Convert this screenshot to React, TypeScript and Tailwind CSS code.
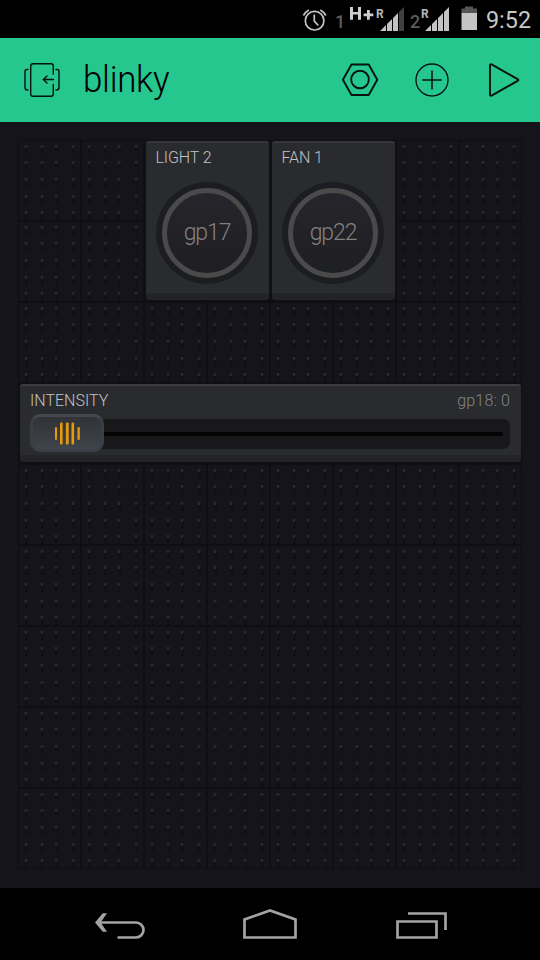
const LABEL = "font-['Roboto','Noto_Sans',sans-serif]";

const DOT_X = [6, 22, 36, 53];
const DOT_Y = [5, 21, 38, 55, 71];

function Cell() {
  return (
    <div className="h-[81px] w-[63px] border border-[#0f0f13]">
      <svg width="61" height="79" viewBox="1 1 61 79" shapeRendering="crispEdges">
        {DOT_Y.map((y) =>
          DOT_X.map((x) => (
            <g key={`${x}-${y}`}>
              <rect x={x + 1} y={y + 2} width="3" height="7" fill="#111115" />
              <rect x={x} y={y} width="4" height="2" fill="#1d1d21" />
              <rect x={x + 1} y={y} width="2" height="3" fill="#28282b" />
            </g>
          )),
        )}
      </svg>
    </div>
  );
}

function ButtonWidget({ title, pin, place }: { title: string; pin: string; place: string }) {
  return (
    <div className={`${place} border border-r-0 border-[#0f0f13] bg-[#111115] pr-[1.5px] pb-[1px] pl-[0.5px]`}>
      <div className="flex h-full flex-col items-center rounded-[3px] border-t-2 border-b-[7px] border-t-[#36363a] border-b-[#222428] bg-[#292b2f]">
        <div className={`${LABEL} h-[39px] w-full pt-[5px] pl-[10px] text-[16px] leading-[20px] font-light tracking-[-0.1px] text-[#c2c2c3]`}>
          {title}
        </div>
        <div className="flex h-[102px] w-[102px] shrink-0 items-center justify-center rounded-full bg-radial from-[#1c1d20] from-85% to-[#222327]">
          <div className="flex h-[90px] w-[90px] items-center justify-center rounded-full border-[5px] border-[#4a4a4a] bg-linear-to-b from-[#26252b] to-[#1e1f22]">
            <span className={`${LABEL} -mt-px text-[23px] leading-none font-light tracking-[-1.1px] text-[#818182]`}>{pin}</span>
          </div>
        </div>
      </div>
    </div>
  );
}

function SliderWidget() {
  return (
    <div className="col-span-8 col-start-1 row-start-4 border border-[#0f0f13] bg-[#111115] pr-[0.5px] pb-[1px] pl-[0.5px]">
      <div className="h-full rounded-[3px] border-t-2 border-b-[7px] border-t-[#3d3d41] border-b-[#222428] bg-[#292b2f] px-[10.5px]">
        <div className={`${LABEL} flex h-[28px] items-start justify-between pt-[5px] text-[16px] leading-[20px] font-light`}>
          <span className="text-[#c2c2c3]">INTENSITY</span>
          <span className="tracking-[0.15px] text-[#858587]">gp18: 0</span>
        </div>
        <div className="flex h-[38px] items-center">
          <div className="z-10 flex h-[38px] w-[74px] shrink-0 items-center justify-center rounded-[10px] border-[3px] border-t-[#44484f] border-r-[#3b3f45] border-b-[#3c4046] border-l-[#3b3f45] bg-linear-to-b from-[#303337] to-[#40444b]">
            <svg width="26" height="24" viewBox="-0.5 -0.5 26 24" fill="#e79a0d">
              <rect x="0.5" y="5.5" width="2" height="13" rx="1" />
              <rect x="5.5" y="1" width="2.6" height="22" rx="1" />
              <rect x="11.4" y="1" width="2.8" height="22" rx="1" />
              <rect x="17" y="1" width="2.6" height="22" rx="1" />
              <rect x="23" y="5.5" width="2.3" height="13" rx="1" />
            </svg>
          </div>
          <div className="mt-[2px] -ml-3 flex h-[30px] grow items-center rounded-r-[7px] bg-[#18181a] pr-[7px]">
            <div className="h-[4px] w-full rounded-full bg-[#030304]" />
          </div>
        </div>
      </div>
    </div>
  );
}

function StatusBar() {
  return (
    <div className="h-[38px] bg-black">
      <svg width="540" height="38" className="font-['Roboto',sans-serif]">
        <g fill="none" stroke="#c4c4c4" strokeWidth="1.7">
          <circle cx="314.6" cy="20.7" r="9.3" />
          <path d="M314.3 14.5v6.7l4 4.3M303.4 15.5a13 13 0 0 1 5.5-5.6M320.3 9.9a13 13 0 0 1 5.5 5.6" />
        </g>
        <text x="335" y="27.7" fontSize="18" fontWeight="500" fill="#5c5c5c">1</text>
        <path d="M350 7h3v5h5V7h3v12.7h-3v-5.2h-5v5.2h-3zM367 10h2.8v3.4h3.5v2.8h-3.5v3.5H367v-3.5h-3.4v-2.8h3.4z" fill="#cecece" />
        <text x="376" y="18" fontSize="12" fontWeight="700" fill="#b8b8b8">R</text>
        <g fill="#c4c4c4">
          <path d="M380 31l6-6v6zM387 24l5-5v12h-5zM393 18l5-5v18h-5z" />
          <path d="M399 12l5-5v24h-5z" fill="#404040" />
        </g>
        <text x="410" y="28" fontSize="18" fontWeight="500" fill="#5c5c5c">2</text>
        <text x="421" y="18" fontSize="12" fontWeight="700" fill="#b8b8b8">R</text>
        <path d="M425 31l6-6v6zM432 24l5-5v12h-5zM438 18l5-5v18h-5zM444 12l5-5v24h-5z" fill="#c4c4c4" />
        <path d="M461.5 8.5h3.5v-2h8v2h4v5h-15.500z" fill="#555" />
        <path d="M461.500 13h15.500v17h-15.500z" fill="#c4c4c4" />
        <text x="486" y="28" fontSize="24.500" fill="#c8c8c8" textLength="45" lengthAdjust="spacingAndGlyphs">9:52</text>
      </svg>
    </div>
  );
}

function Toolbar() {
  return (
    <header className="flex h-[84px] items-center bg-[#26c68f]">
      <svg width="36" height="36" viewBox="24 62 36 36" className="ml-6 shrink-0" fill="none" stroke="#06140f" strokeWidth="1.4" strokeLinecap="round">
        <path d="M53.300 74V66a2.300 2.300 0 0 0-2.300-2.300H33a2.300 2.300 0 0 0-2.300 2.300v28a2.300 2.300 0 0 0 2.300 2.300h18a2.300 2.300 0 0 0 2.300-2.300V84.500" />
        <path d="M28 69.500h-1a2 2 0 0 0-2 2V87.500a2.500 2.500 0 0 0 2.500 2.500h.500M56 69.500h1a2 2 0 0 1 2 2V87.500a2.500 2.500 0 0 1-2.500 2.500H56M53.500 79.500H43.500M47 76l-3.700 3.500L47 83" />
      </svg>
      <h1 className="ml-[23px] h-[46px] w-[90px] origin-left scale-x-[0.97] font-['Roboto','Noto_Sans',sans-serif] text-[36px] leading-[46px] font-light tracking-[-0.3px] text-black">blinky</h1>
      <svg width="198" height="40" viewBox="342 60 198 40" className="ml-[169px] shrink-0" fill="none" stroke="#06140f" strokeLinejoin="round">
        <g strokeWidth="1.900">
          <path d="M351.500 64.500h17.200l8.600 15.200-8.600 15.300h-17.200l-8.600-15.300z" />
          <circle cx="360" cy="79.500" r="8.800" />
          <path d="M490 65.200V94.800a1 1 0 0 0 1.600.8L518 80.700a.9.900 0 0 0 0-1.400L491.600 64.400a1 1 0 0 0-1.600.8z" />
        </g>
        <circle cx="432" cy="80" r="16" strokeWidth="1.300" />
        <path d="M432 70.500v19M422.300 80h19.400" strokeWidth="1.500" />
      </svg>
    </header>
  );
}

function NavBar() {
  return (
    <nav className="flex h-[72px] items-center bg-black">
      <svg width="540" height="72" viewBox="0 888 540 72" fill="none" stroke="#a3a3a3" strokeWidth="2.700">
        <path d="M98 922.500h38a7.400 7.400 0 0 1 0 15H117.500" />
        <path d="M107 913.200h-4.200l-7.800 9.300 7.800 9.300h4.200l-6.400-9.300z" fill="#a3a3a3" stroke="none" />
        <path d="M244.500 919.500v18h51v-18L270 910.500z" />
        <path d="M397.500 921.500h39v16h-39zM408 913.500h37.500V930" />
      </svg>
    </nav>
  );
}

export default function App() {
  return (
    <div className="flex h-[960px] w-[540px] flex-col overflow-hidden bg-[#15141a]">
      <StatusBar />
      <Toolbar />
      <main className="grow px-[18px] pt-[18px]">
        <div className="grid w-[504px] grid-cols-8 grid-rows-[repeat(9,81px)]">
          <ButtonWidget title="LIGHT 2" pin="gp17" place="col-start-3 col-span-2 row-start-1 row-span-2" />
          <ButtonWidget title="FAN 1" pin="gp22" place="col-start-5 col-span-2 row-start-1 row-span-2" />
          <SliderWidget />
          {Array.from({ length: 56 }, (_, i) => (
            <Cell key={i} />
          ))}
        </div>
      </main>
      <NavBar />
    </div>
  );
}
